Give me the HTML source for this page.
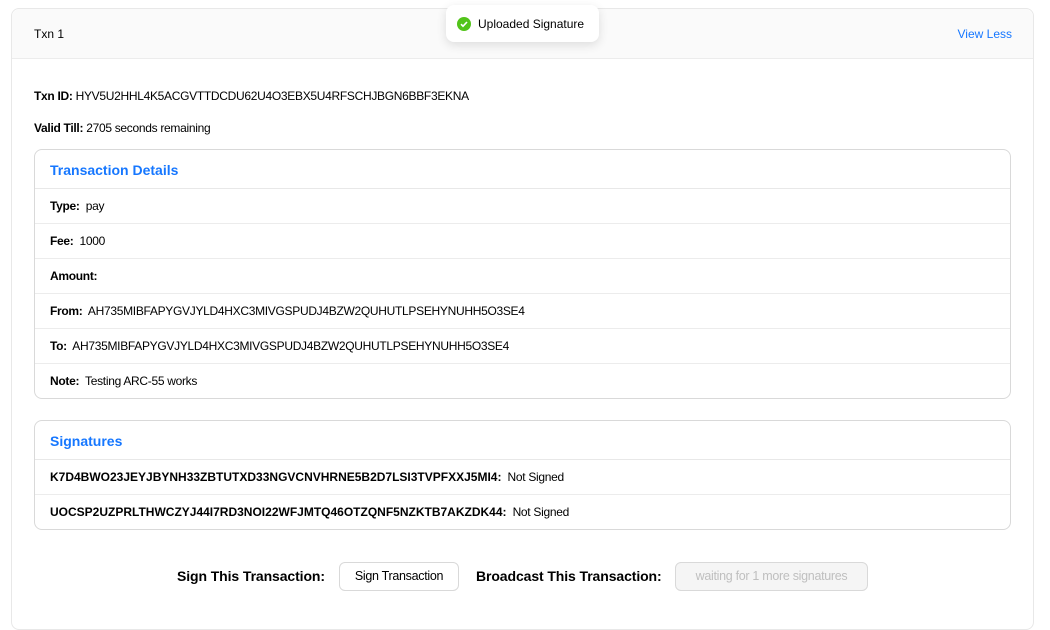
<!DOCTYPE html>
<html><head><style>
body{margin:0;width:1050px;height:611px;background:#fff;font-family:"Liberation Sans",sans-serif;font-size:12px;color:#000;overflow:hidden;position:relative}
.card{position:absolute;left:11px;top:8px;width:1021px;height:620px;border:1px solid #e8e8e8;border-radius:8px;background:#fff}
.hd{height:49px;background:#fafafa;border-bottom:1px solid #ececec;border-radius:8px 8px 0 0;position:relative}
.hd .t{position:absolute;left:22px;top:18px;font-size:12px}
.hd .v{position:absolute;right:21px;top:18px;color:#1677ff;font-size:12px}
.txt{position:absolute;left:34px;font-size:12px;letter-spacing:-0.3px}
b{font-weight:bold}
.box{position:absolute;left:34px;width:975px;border:1px solid #d9d9d9;border-radius:8px}
.box .h{height:38px;line-height:40px;padding-left:15px;color:#1677ff;font-weight:bold;font-size:14px;border-bottom:1px solid #e8e8e8}
.row{height:34px;line-height:35px;padding-left:15px;border-bottom:1px solid #ececec;letter-spacing:-0.3px}
.row:last-child{border-bottom:none}
.sig .row b{letter-spacing:0px}
.toast{position:absolute;left:446px;top:5px;width:153px;height:37px;background:#fff;border-radius:8px;box-shadow:0 3px 10px rgba(0,0,0,.12);font-size:12px}
.toast span{position:absolute;left:32px;top:12px}
.toast i{position:absolute;left:11px;top:12px;width:14px;height:14px;border-radius:50%;background:#52c41a}
.btn{position:absolute;top:562px;height:27px;line-height:27px;border:1px solid #d9d9d9;border-radius:6px;font-size:12.5px;text-align:center;letter-spacing:-0.3px}
.lbl{position:absolute;top:568px;font-weight:bold;font-size:14px;letter-spacing:-0.1px}
</style></head><body>
<div class="card"><div class="hd"><span class="t">Txn 1</span><span class="v">View Less</span></div></div>
<div class="toast"><i><svg width="14" height="14" viewBox="0 0 14 14"><path d="M4 7.2l2 2 4-4.2" stroke="#fff" stroke-width="1.6" fill="none"/></svg></i><span>Uploaded Signature</span></div>
<div class="txt" style="top:89px"><b>Txn ID:</b> HYV5U2HHL4K5ACGVTTDCDU62U4O3EBX5U4RFSCHJBGN6BBF3EKNA</div>
<div class="txt" style="top:121px"><b>Valid Till:</b> 2705 seconds remaining</div>
<div class="box" style="top:149px">
<div class="h">Transaction Details</div>
<div class="row"><b>Type:</b>&nbsp; pay</div>
<div class="row"><b>Fee:</b>&nbsp; 1000</div>
<div class="row"><b>Amount:</b></div>
<div class="row"><b>From:</b>&nbsp; AH735MIBFAPYGVJYLD4HXC3MIVGSPUDJ4BZW2QUHUTLPSEHYNUHH5O3SE4</div>
<div class="row"><b>To:</b>&nbsp; AH735MIBFAPYGVJYLD4HXC3MIVGSPUDJ4BZW2QUHUTLPSEHYNUHH5O3SE4</div>
<div class="row"><b>Note:</b>&nbsp; Testing ARC-55 works</div>
</div>
<div class="box sig" style="top:420px">
<div class="h">Signatures</div>
<div class="row"><b>K7D4BWO23JEYJBYNH33ZBTUTXD33NGVCNVHRNE5B2D7LSI3TVPFXXJ5MI4:</b>&nbsp; Not Signed</div>
<div class="row"><b>UOCSP2UZPRLTHWCZYJ44I7RD3NOI22WFJMTQ46OTZQNF5NZKTB7AKZDK44:</b>&nbsp; Not Signed</div>
</div>
<div class="lbl" style="left:177px">Sign This Transaction:</div>
<div class="btn" style="left:339px;width:118px">Sign Transaction</div>
<div class="lbl" style="left:476px">Broadcast This Transaction:</div>
<div class="btn" style="left:675px;width:191px;background:#f5f5f5;color:#bfbfbf">waiting for 1 more signatures</div>
</body></html>
